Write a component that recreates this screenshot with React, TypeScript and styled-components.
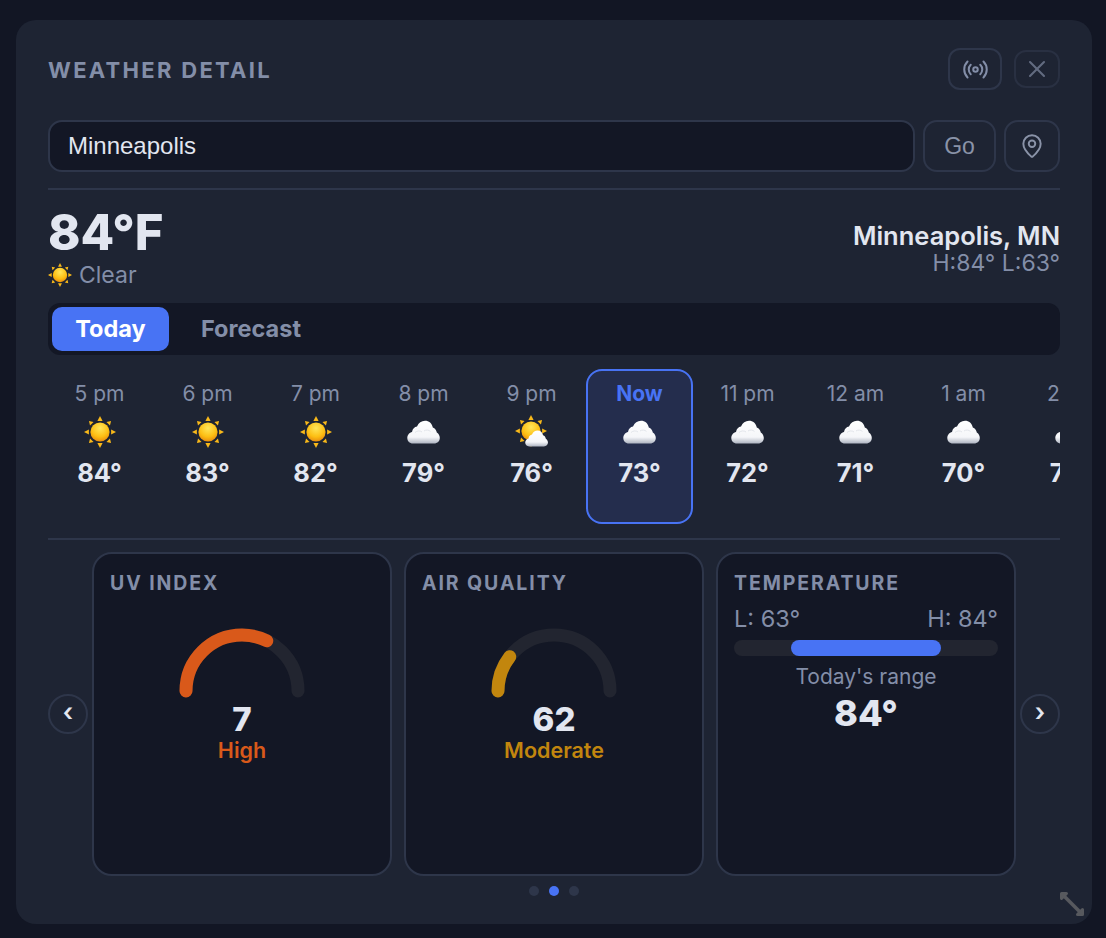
import styled, { createGlobalStyle } from 'styled-components'
import { MapPin, Radio, X } from 'lucide-react'

const colors = {
  page: '#121624',
  panel: '#1e2433',
  well: '#131725',
  line: '#2e364a',
  text: '#e2e6f0',
  muted: '#838ea8',
  blue: '#4873f4',
  orange: '#d9591a',
  amber: '#c2860e',
  track: '#222530'
}

const GlobalStyle = createGlobalStyle`
  html, body {
    margin: 0;
    padding: 0;
    background: ${colors.page};
    font-family: Inter, "Liberation Sans", sans-serif;
    color: ${colors.text};
  }
  * {
    box-sizing: border-box;
  }
`

const Page = styled.div`
  width: 1106px;
  height: 938px;
  padding: 20px 14px 14px 16px;
  overflow: hidden;
`

const Panel = styled.main`
  position: relative;
  height: 904px;
  padding: 28px 32px 0;
  background: ${colors.panel};
  border-radius: 20px;
`

const Header = styled.header`
  display: flex;
  align-items: center;
  height: 42px;
  gap: 12px;
`

const Title = styled.h1`
  flex: 1;
  margin: 2px 0 0;
  font-size: 22px;
  font-weight: 700;
  letter-spacing: 2.3px;
  color: ${colors.muted};
`

const IconButton = styled.button<{ $w: number; $h: number; $faint?: boolean }>`
  display: flex;
  align-items: center;
  justify-content: center;
  width: ${props => props.$w}px;
  height: ${props => props.$h}px;
  padding: 0;
  background: none;
  border: 2px solid ${props => (props.$faint ? '#293042' : colors.line)};
  border-radius: 12px;
  color: ${props => (props.$faint ? '#626b80' : colors.muted)};
`

const SearchRow = styled.div`
  display: flex;
  gap: 8px;
  margin-top: 30px;
  height: 52px;
`

const SearchInput = styled.input`
  flex: 1;
  min-width: 0;
  padding: 0 18px;
  background: ${colors.well};
  border: 2px solid ${colors.line};
  border-radius: 14px;
  outline: none;
  font-family: "Liberation Sans", sans-serif;
  font-size: 24px;
  color: ${colors.text};
`

const GoButton = styled.button`
  width: 73px;
  background: none;
  border: 2px solid ${colors.line};
  border-radius: 14px;
  font-family: "Liberation Sans", sans-serif;
  font-size: 23px;
  color: #8a93a8;
`

const PinButton = styled(GoButton)`
  display: flex;
  align-items: center;
  justify-content: center;
  width: 56px;
  padding: 0;
`

const Divider = styled.hr<{ $gap: number }>`
  height: 2px;
  margin: ${props => props.$gap}px 0 0;
  background: ${colors.line};
  border: 0;
`

const Current = styled.section`
  display: flex;
  justify-content: space-between;
  height: 113px;
`

const Reading = styled.div`
  display: flex;
  flex-direction: column;
`

const BigTemp = styled.div`
  margin-top: 16px;
  font-size: 49px;
  line-height: 54px;
  font-weight: 800;
`

const Condition = styled.div`
  display: flex;
  align-items: center;
  gap: 7px;
  font-size: 23px;
  line-height: 30px;
  color: ${colors.muted};
`

const Place = styled.div`
  margin-top: 30px;
  text-align: right;
`

const PlaceName = styled.div`
  font-size: 25.5px;
  line-height: 32px;
  font-weight: 600;
`

const HighLow = styled.div`
  font-size: 23px;
  line-height: 22px;
  color: ${colors.muted};
`

const Tabs = styled.nav`
  display: flex;
  height: 52px;
  padding: 4px;
  background: ${colors.well};
  border-radius: 12px;
`

const Tab = styled.div<{ $active?: boolean }>`
  display: flex;
  align-items: center;
  justify-content: center;
  width: ${props => (props.$active ? 117 : 164)}px;
  padding-bottom: 2px;
  border-radius: 10px;
  font-size: 23.5px;
  font-weight: 700;
  color: ${props => (props.$active ? '#fff' : colors.muted)};
  background: ${props => (props.$active ? colors.blue : 'none')};
`

const HourStrip = styled.div`
  display: flex;
  gap: 1px;
  height: 155px;
  margin: 14px 0 0 -2px;
  overflow: hidden;
`

const Hour = styled.div<{ $now?: boolean }>`
  display: flex;
  flex-direction: column;
  align-items: center;
  flex: 0 0 107px;
  padding-top: 11px;
  border: 2px solid ${props => (props.$now ? colors.blue : 'transparent')};
  border-radius: 16px;
  background: ${props => (props.$now ? '#242d4d' : 'none')};
`

const HourLabel = styled.div<{ $now?: boolean }>`
  font-size: 21px;
  line-height: 24px;
  font-weight: ${props => (props.$now ? 700 : 400)};
  color: ${props => (props.$now ? colors.blue : colors.muted)};
`

const HourIcon = styled.div`
  display: flex;
  align-items: center;
  justify-content: center;
  width: 100%;
  margin-top: 8px;
  height: 36px;
`

const HourTemp = styled.div`
  margin-top: 8px;
  font-size: 25.5px;
  line-height: 30px;
  font-weight: 700;
`

const Carousel = styled.section`
  display: flex;
  align-items: center;
  justify-content: space-between;
  margin-top: 12px;
  height: 324px;
`

const Arrow = styled.button`
  display: flex;
  align-items: center;
  justify-content: center;
  width: 40px;
  height: 40px;
  padding: 0 0 4px;
  background: none;
  border: 2px solid ${colors.line};
  border-radius: 50%;
  font-family: Inter, sans-serif;
  font-size: 25px;
  font-weight: 600;
  color: ${colors.text};
`

const Cards = styled.div`
  display: grid;
  grid-template-columns: repeat(3, 300px);
  gap: 12px;
  height: 100%;
`

const Card = styled.article`
  display: flex;
  flex-direction: column;
  padding: 18px 16px;
  background: ${colors.well};
  border: 2px solid ${colors.line};
  border-radius: 20px;
`

const CardTitle = styled.h2`
  margin: 0;
  font-size: 19.5px;
  line-height: 22px;
  font-weight: 700;
  letter-spacing: 1.9px;
  color: ${colors.muted};
`

const GaugeBox = styled.div`
  display: flex;
  justify-content: center;
  margin-top: 30px;
  height: 76px;
`

const GaugeValue = styled.div`
  text-align: center;
  font-size: 33px;
  line-height: 38px;
  font-weight: 800;
`

const GaugeLabel = styled.div<{ $color: string }>`
  text-align: center;
  font-size: 21.5px;
  line-height: 24px;
  font-weight: 600;
  color: ${props => props.$color};
`

const RangeEnds = styled.div`
  display: flex;
  justify-content: space-between;
  margin-top: 11px;
  font-size: 23.5px;
  line-height: 27px;
  color: ${colors.muted};
`

const RangeTrack = styled.div`
  position: relative;
  height: 16px;
  margin-top: 8px;
  background: ${colors.track};
  border-radius: 8px;
`

const RangeFill = styled.div`
  position: absolute;
  top: 0;
  bottom: 0;
  background: ${colors.blue};
  border-radius: 8px;
`

const RangeCaption = styled.div`
  margin-top: 7px;
  text-align: center;
  font-size: 21px;
  line-height: 28px;
  color: ${colors.muted};
`

const RangeNow = styled.div`
  text-align: center;
  font-size: 36px;
  line-height: 44px;
  font-weight: 800;
`

const Dots = styled.div`
  display: flex;
  justify-content: center;
  gap: 10px;
  margin-top: 10px;
`

const Dot = styled.span<{ $active?: boolean }>`
  width: 10px;
  height: 10px;
  border-radius: 50%;
  background: ${props => (props.$active ? colors.blue : colors.line)};
`

const ResizeHandle = styled.svg`
  position: absolute;
  right: 6px;
  bottom: 6px;
`

const HiddenDefs = styled.svg`
  position: absolute;
`

const SvgDefs = () => (
  <HiddenDefs width="0" height="0">
    <defs>
      <radialGradient id="sunBody" cx="50%" cy="30%" r="75%">
        <stop offset="0%" stopColor="#ffe65a" />
        <stop offset="60%" stopColor="#fdbf13" />
        <stop offset="100%" stopColor="#e5830c" />
      </radialGradient>
      <linearGradient id="cloudBody" x1="0" y1="0" x2="0" y2="1">
        <stop offset="0%" stopColor="#ffffff" />
        <stop offset="72%" stopColor="#f5f6f9" />
        <stop offset="100%" stopColor="#aeb4c1" />
      </linearGradient>
    </defs>
  </HiddenDefs>
)

const rays = [0, 45, 90, 135, 180, 225, 270, 315]

const SunShape = () => (
  <>
    {rays.map(a => (
      <polygon
        key={a}
        points={a % 90 === 0 ? '13.4,4.9 18.6,4.9 16,0' : '13.5,4.4 18.5,4.4 16,0.4'}
        transform={`rotate(${a} 16 16)`}
        fill="#f9b91a"
      />
    ))}
    <circle cx="16" cy="16" r="9.6" fill="url(#sunBody)" />
  </>
)

const Sun = ({ size = 32 }: { size?: number }) => (
  <svg width={size} height={size} viewBox="0 0 32 32">
    <SunShape />
  </svg>
)

const cloudPath =
  'M6 23.5C2.5 23.5 0.3 21 0.3 18C0.3 15 2.5 12.5 5 12C5.5 8.8 7.5 7 10 6.5C11.5 3 14.5 0.8 18 0.8C22 0.8 25 3.5 25.8 7.5C28 8 29.5 10.5 29.8 12.5C31.8 13.5 32.8 16 32.8 18C32.8 21 30.5 23.5 27 23.5Z'

const Cloud = () => (
  <svg width="33" height="24" viewBox="0 0 33 24">
    <path d={cloudPath} fill="url(#cloudBody)" />
    <path d="M8 12.5C10 10.6 13 10.4 15 12M17 11C19 9.6 21.6 9.8 23.5 11.4" fill="none" stroke="#dcdfe6" strokeWidth="0.8" />
  </svg>
)

const PartlyCloudy = () => (
  <svg width="34" height="34" viewBox="0 0 34 34">
    <SunShape />
    <g transform="translate(10 15) scale(0.7)">
      <path d={cloudPath} fill="url(#cloudBody)" />
    </g>
  </svg>
)

const Gauge = ({ pct, color }: { pct: number; color: string }) => (
  <svg width="126" height="76" viewBox="0 0 126 76">
    <path d="M7 67A56 56 0 0 1 119 67" fill="none" stroke={colors.track} strokeWidth="13" strokeLinecap="round" />
    <path
      d="M7 67A56 56 0 0 1 119 67"
      fill="none"
      stroke={color}
      strokeWidth="13"
      strokeLinecap="round"
      pathLength={100}
      strokeDasharray={`${pct} 100`}
    />
  </svg>
)

type Kind = 'sun' | 'cloud' | 'partly'

const hours: { label: string; kind: Kind; temp: string; now?: boolean }[] = [
  { label: '5 pm', kind: 'sun', temp: '84°' },
  { label: '6 pm', kind: 'sun', temp: '83°' },
  { label: '7 pm', kind: 'sun', temp: '82°' },
  { label: '8 pm', kind: 'cloud', temp: '79°' },
  { label: '9 pm', kind: 'partly', temp: '76°' },
  { label: 'Now', kind: 'cloud', temp: '73°', now: true },
  { label: '11 pm', kind: 'cloud', temp: '72°' },
  { label: '12 am', kind: 'cloud', temp: '71°' },
  { label: '1 am', kind: 'cloud', temp: '70°' },
  { label: '2 am', kind: 'cloud', temp: '70°' }
]

const WeatherIcon = ({ kind }: { kind: Kind }) => {
  if (kind === 'sun') return <Sun />
  if (kind === 'partly') return <PartlyCloudy />
  return <Cloud />
}

const App = (): JSX.Element => (
  <Page>
    <GlobalStyle />
    <SvgDefs />
    <Panel>
      <Header>
        <Title>WEATHER DETAIL</Title>
        <IconButton $w={54} $h={42}>
          <Radio size={27} strokeWidth={1.8} />
        </IconButton>
        <IconButton $w={46} $h={38} $faint>
          <X size={28} strokeWidth={1.8} />
        </IconButton>
      </Header>

      <SearchRow>
        <SearchInput readOnly value="Minneapolis" />
        <GoButton>Go</GoButton>
        <PinButton>
          <MapPin size={26} strokeWidth={1.8} />
        </PinButton>
      </SearchRow>
      <Divider $gap={16} />

      <Current>
        <Reading>
          <BigTemp>84°F</BigTemp>
          <Condition>
            <Sun size={24} />
            Clear
          </Condition>
        </Reading>
        <Place>
          <PlaceName>Minneapolis, MN</PlaceName>
          <HighLow>H:84° L:63°</HighLow>
        </Place>
      </Current>

      <Tabs>
        <Tab $active>Today</Tab>
        <Tab>Forecast</Tab>
      </Tabs>

      <HourStrip>
        {hours.map(h => (
          <Hour key={h.label} $now={h.now}>
            <HourLabel $now={h.now}>{h.label}</HourLabel>
            <HourIcon>
              <WeatherIcon kind={h.kind} />
            </HourIcon>
            <HourTemp>{h.temp}</HourTemp>
          </Hour>
        ))}
      </HourStrip>
      <Divider $gap={14} />

      <Carousel>
        <Arrow>‹</Arrow>
        <Cards>
          <Card>
            <CardTitle>UV INDEX</CardTitle>
            <GaugeBox>
              <Gauge pct={64.6} color={colors.orange} />
            </GaugeBox>
            <GaugeValue>7</GaugeValue>
            <GaugeLabel $color={colors.orange}>High</GaugeLabel>
          </Card>
          <Card>
            <CardTitle>AIR QUALITY</CardTitle>
            <GaugeBox>
              <Gauge pct={21} color={colors.amber} />
            </GaugeBox>
            <GaugeValue>62</GaugeValue>
            <GaugeLabel $color={colors.amber}>Moderate</GaugeLabel>
          </Card>
          <Card>
            <CardTitle>TEMPERATURE</CardTitle>
            <RangeEnds>
              <span>L: 63°</span>
              <span>H: 84°</span>
            </RangeEnds>
            <RangeTrack>
              <RangeFill style={{ left: '21.6%', width: '56.8%' }} />
            </RangeTrack>
            <RangeCaption>Today's range</RangeCaption>
            <RangeNow>84°</RangeNow>
          </Card>
        </Cards>
        <Arrow>›</Arrow>
      </Carousel>

      <Dots>
        <Dot />
        <Dot $active />
        <Dot />
      </Dots>

      <ResizeHandle width="28" height="28" viewBox="0 0 28 28" fill="none" stroke="#57595e" strokeLinecap="round" strokeLinejoin="round">
        <path d="M6 6L22 22" strokeWidth="3.5" />
        <path d="M3.5 8.5V3.5H8.5ZM24.5 19.5V24.5H19.5Z" fill="#57595e" strokeWidth="3" />
      </ResizeHandle>
    </Panel>
  </Page>
)

export default App
